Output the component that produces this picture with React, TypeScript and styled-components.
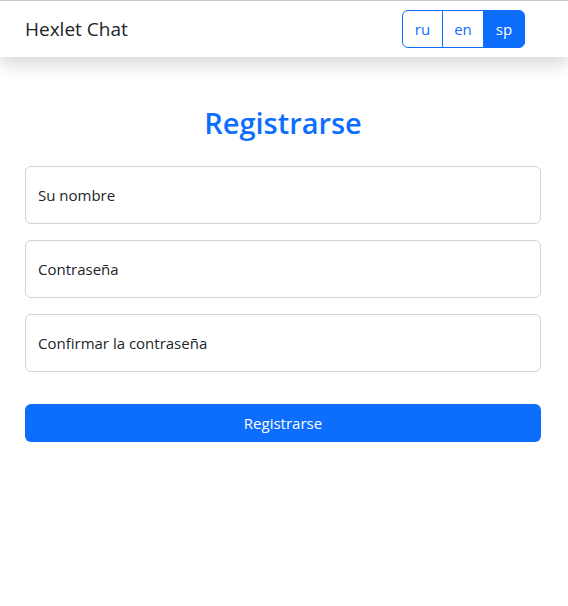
import * as React from "react";
import styled, { createGlobalStyle } from "styled-components";

const GlobalStyle = createGlobalStyle`
  html, body {
    margin: 0;
    padding: 0;
    background: #fff;
    font-family: "Open Sans", "Noto Sans", sans-serif;
    color: #212529;
  }
`;

const Page = styled.div`
  display: flex;
  flex-direction: column;
  min-height: 606px;
  border-top: 1px solid #cfcfcf;
  box-sizing: border-box;
`;

const Navbar = styled.nav`
  display: flex;
  align-items: center;
  justify-content: space-between;
  height: 56px;
  padding: 0 43px 0 25px;
  background: #fff;
  box-shadow: 0 8px 16px rgba(0, 0, 0, 0.15);
`;

const Brand = styled.a`
  font-size: 19px;
  color: #212529;
  text-decoration: none;
`;

const LangGroup = styled.div`
  display: flex;
  height: 38px;
`;

const LangButton = styled.button<{ $active?: boolean }>`
  width: 42px;
  padding: 0;
  font-family: inherit;
  font-size: 15px;
  border: 1px solid #0d6efd;
  background: ${(p) => (p.$active ? "#0d6efd" : "#fff")};
  color: ${(p) => (p.$active ? "#fff" : "#0d6efd")};
  margin-left: -1px;
  &:first-child {
    width: 41px;
    margin-left: 0;
    border-radius: 6px 0 0 6px;
  }
  &:last-child {
    border-radius: 0 6px 6px 0;
  }
`;

const Main = styled.main`
  display: flex;
  flex-direction: column;
  padding: 49px 27px 0 25px;
`;

const Title = styled.h1`
  margin: 0 0 25px;
  text-align: center;
  font-size: 29px;
  font-weight: 600;
  line-height: 1.2;
  color: #0d6efd;
`;

const Form = styled.form`
  display: flex;
  flex-direction: column;
  gap: 16px;
`;

const Field = styled.input`
  box-sizing: border-box;
  height: 58px;
  padding: 0 12px;
  font-family: inherit;
  font-size: 15px;
  border: 1px solid #ced4da;
  border-radius: 6px;
  color: #212529;
  &::placeholder {
    color: #212529;
  }
`;

const Submit = styled.button`
  margin-top: 16px;
  height: 38px;
  font-family: inherit;
  font-size: 15px;
  color: #fff;
  background: #0d6efd;
  border: none;
  border-radius: 6px;
`;

export default function App() {
  return (
    <Page>
      <GlobalStyle />
      <Navbar>
        <Brand href="#">Hexlet Chat</Brand>
        <LangGroup>
          <LangButton>ru</LangButton>
          <LangButton>en</LangButton>
          <LangButton $active>sp</LangButton>
        </LangGroup>
      </Navbar>
      <Main>
        <Title>Registrarse</Title>
        <Form onSubmit={(e) => e.preventDefault()}>
          <Field placeholder="Su nombre" />
          <Field placeholder="Contraseña" type="password" />
          <Field placeholder="Confirmar la contraseña" type="password" />
          <Submit type="submit">Registrarse</Submit>
        </Form>
      </Main>
    </Page>
  );
}
